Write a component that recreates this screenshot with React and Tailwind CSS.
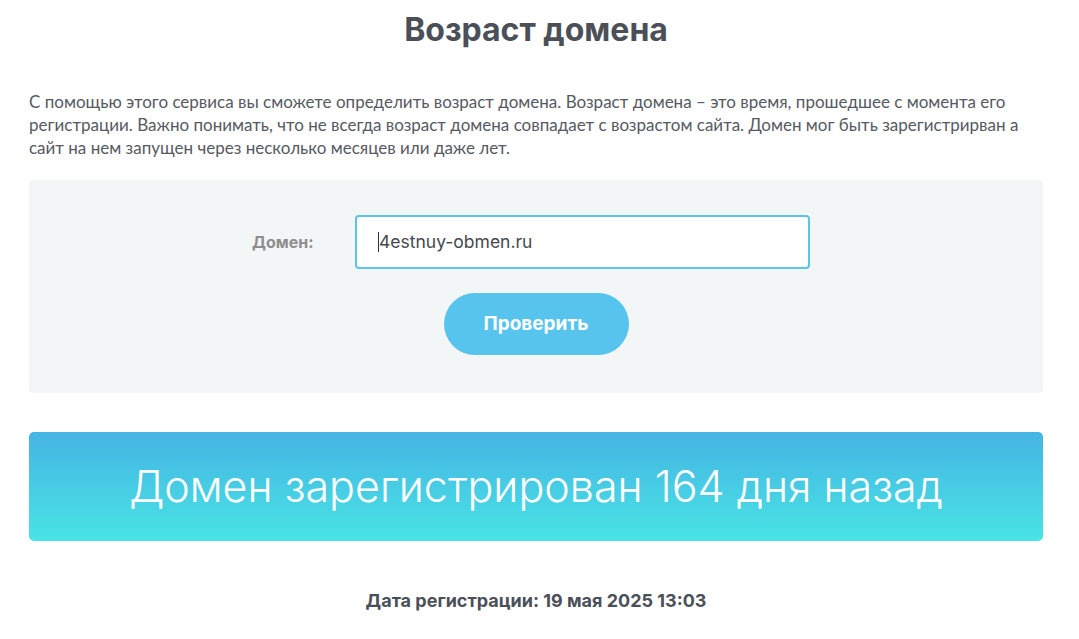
import React from 'react';

// Domain age checker page

const App = () => {
  const heading = { fontFamily: 'Inter, "Open Sans", sans-serif' };
  const body = { fontFamily: 'Lato, "Open Sans", sans-serif' };

  return (
    <div className="min-h-screen bg-white pb-6">
      <div className="ml-[29px] w-[1014px]">
        <h1
          className="pt-[12px] text-center text-[32px] font-bold leading-[36px] text-[#4b5058]"
          style={heading}
        >
          Возраст домена
        </h1>

        <p className="mt-[42px] text-[17px] leading-[23px] text-[#555a62]" style={body}>
          С помощью этого сервиса вы сможете определить возраст домена. Возраст домена – это время, прошедшее с момента его
          <br />
          регистрации. Важно понимать, что не всегда возраст домена совпадает с возрастом сайта. Домен мог быть зарегистрирван а
          <br />
          сайт на нем запущен через несколько месяцев или даже лет.
        </p>

        <div className="mt-[21px] flex h-[213px] flex-col items-center rounded-[4px] bg-[#f3f6f7] pt-[35px]">
          <div className="ml-[-10px] flex items-center">
            <label className="w-[103px] text-[16px] font-bold text-[#8d8d8d]" style={heading}>
              Домен:
            </label>
            <div className="flex h-[54px] w-[455px] items-center rounded-[4px] border-2 border-[#5bc3ec] bg-white pl-[21px]">
              <span className="h-[20px] w-px bg-[#333]" />
              <span className="text-[17.5px] text-[#45494f]" style={heading}>
                4estnuy-obmen.ru
              </span>
            </div>
          </div>
          <button
            className="mt-[24px] h-[62px] w-[185px] rounded-full bg-[#56c4ec] text-[19px] font-bold text-white"
            style={heading}
          >
            Проверить
          </button>
        </div>

        <div className="mt-[39px] flex h-[109px] items-center justify-center rounded-[5px] bg-gradient-to-b from-[#45b4e3] to-[#49e4e5]">
          <span className="text-[43px] font-light text-white" style={heading}>
            Домен зарегистрирован 164 дня назад
          </span>
        </div>

        <p className="mt-[46px] text-center text-[18px] font-bold text-[#4b5058]" style={heading}>
          Дата регистрации: 19 мая 2025 13:03
        </p>
      </div>
    </div>
  );
};

export default App;
